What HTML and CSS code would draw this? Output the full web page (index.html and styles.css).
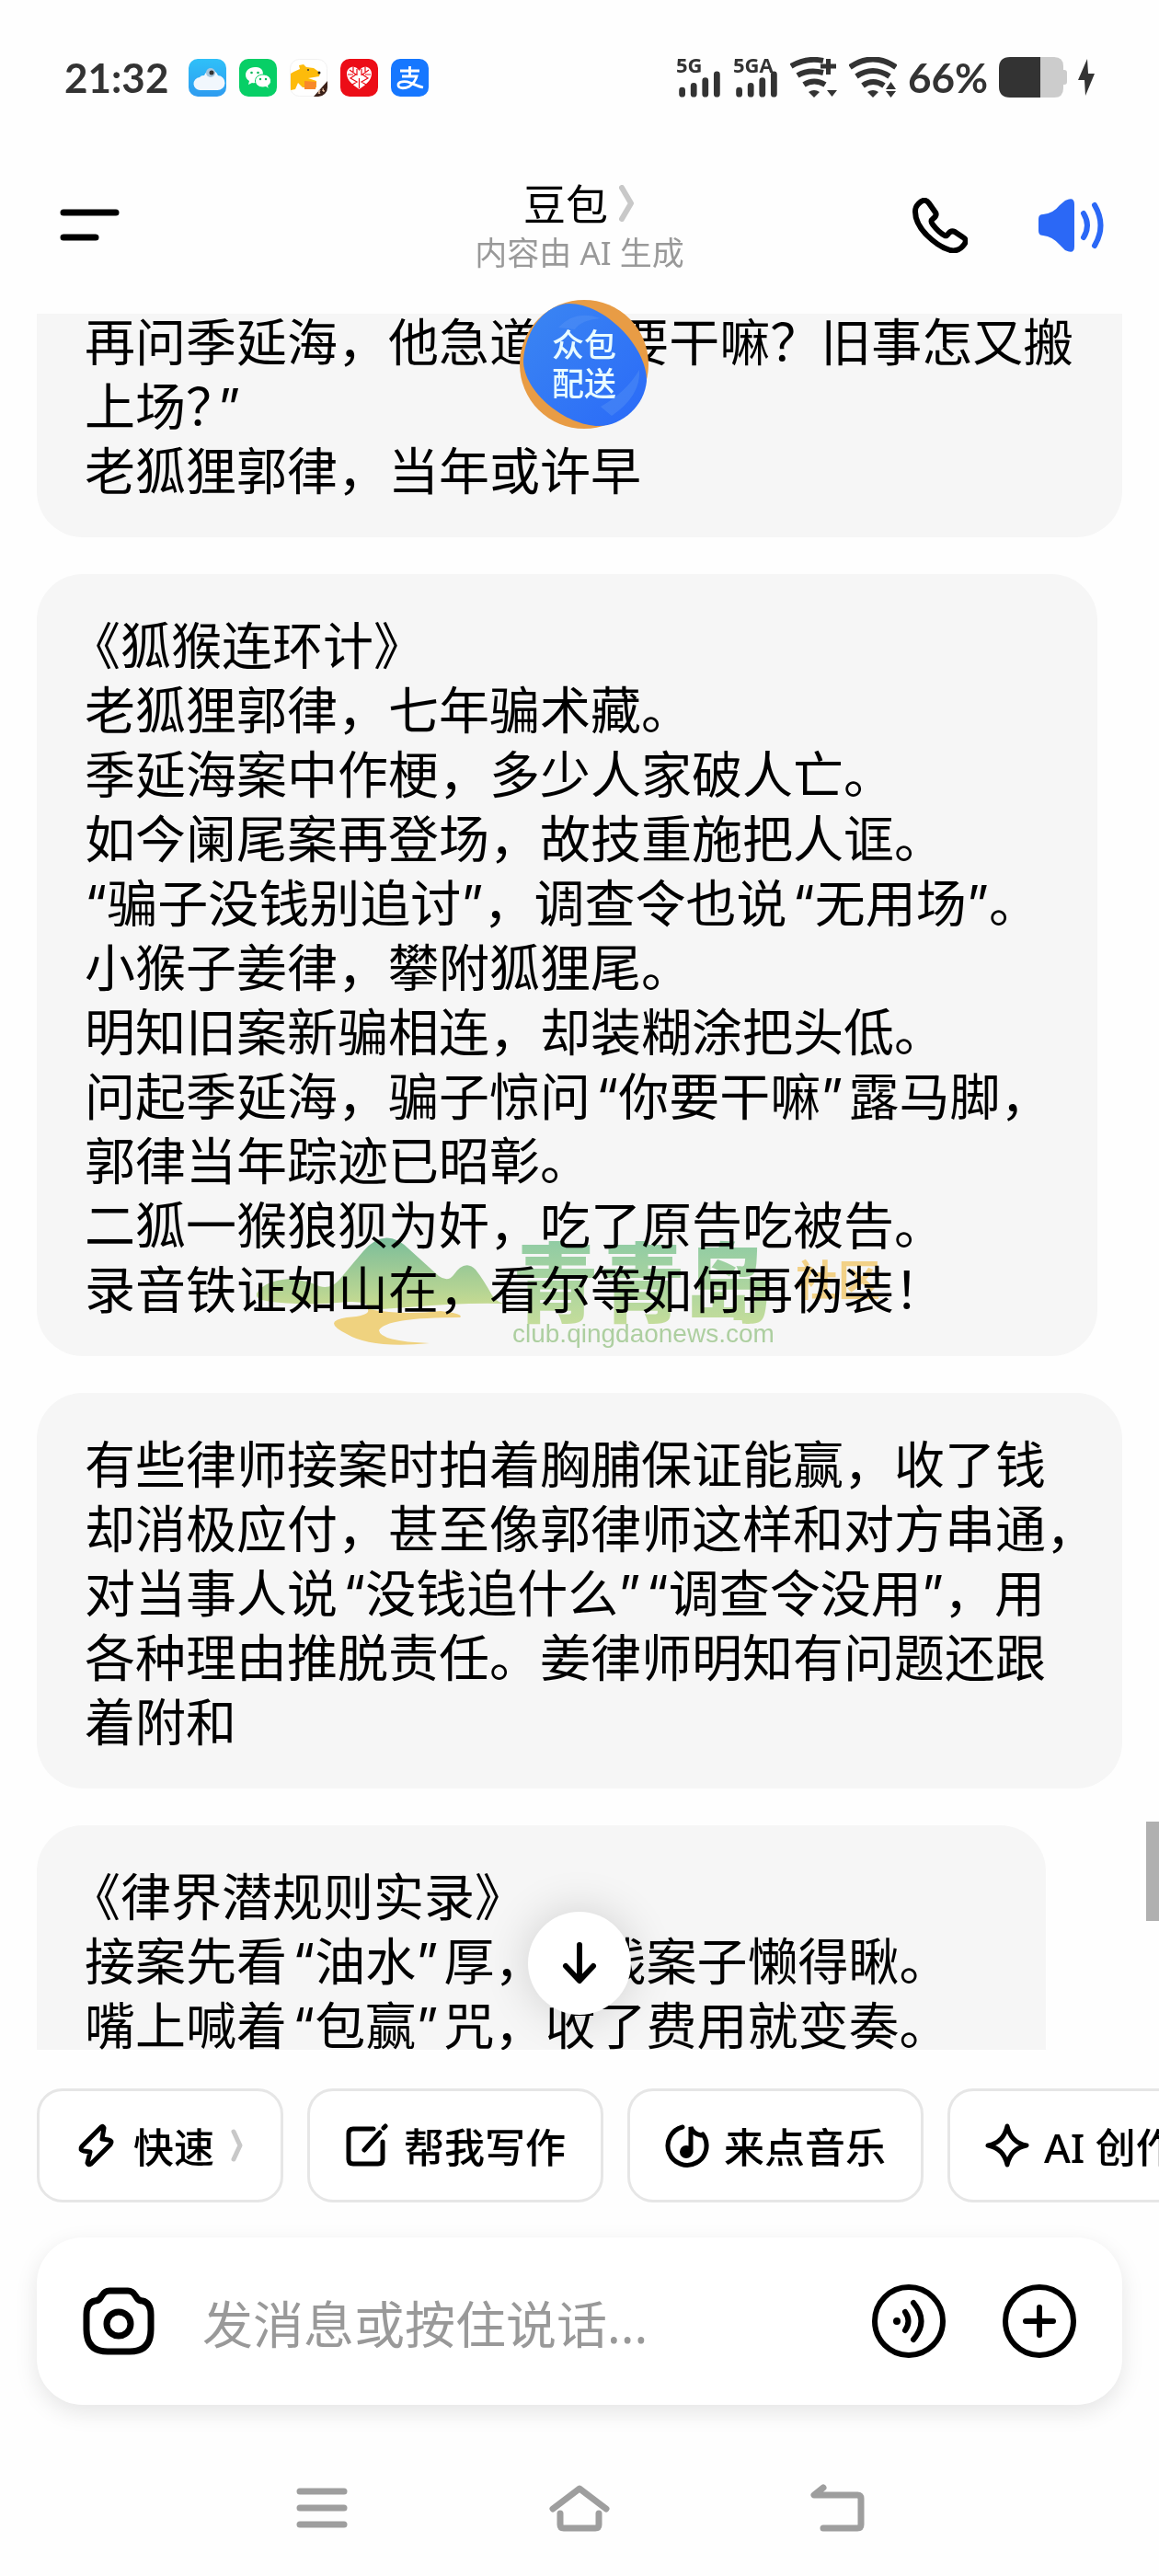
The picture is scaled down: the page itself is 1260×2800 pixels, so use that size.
FILE: index.html
```html
<!DOCTYPE html>
<html lang="zh-CN">
<head>
    <meta charset="UTF-8">
    <meta name="viewport" content="width=device-width, initial-scale=1.0">
    <title>豆包</title>
    <link rel="stylesheet" href="styles.css">
</head>
<body>
    <div class="status-bar">
        <div class="status-left">
            <span class="clock">21:32</span>
            <svg class="app-icon" viewBox="0 0 41 41">
                <defs><linearGradient id="sky" x1="0" y1="0" x2="0" y2="1"><stop offset="0" stop-color="#2fc0f8"/><stop offset="1" stop-color="#2f9cf0"/></linearGradient></defs>
                <rect width="41" height="41" rx="10" fill="url(#sky)"/>
                <path d="M13 34a7 7 0 0 1-1-14 5 5 0 0 1 5-2 8 8 0 0 1 15 0 7 7 0 0 1-1 16z" fill="#f1f7fd"/>
                <circle cx="24" cy="15" r="5" fill="#a9c6dc"/>
                <circle cx="25" cy="15" r="2.500" fill="#333"/>
            </svg>
            <svg class="app-icon" viewBox="0 0 41 41">
                <rect width="41" height="41" rx="10" fill="#07cf66"/>
                <path d="M17 9c-6 0-10 4-10 8.500 0 3 1.500 5 4 6.500l-1 4 4-2c5 1 12-2 12-9S22 9 17 9z" fill="#fff"/>
                <path d="M26 17c-5 0-8.500 3-8.500 7s3.500 7 8.500 7l3-.5 3.500 2-1-3.500c2-1 3-3 3-5 0-4-3.500-7-8.500-7z" fill="#fff" stroke="#07cf66" stroke-width="1"/>
                <g fill="#07b85a"><circle cx="13.500" cy="15" r="1.300"/><circle cx="20.500" cy="15" r="1.300"/><circle cx="23" cy="22" r="1.200"/><circle cx="29" cy="22" r="1.200"/></g>
            </svg>
            <svg class="app-icon" viewBox="0 0 41 41">
                <rect x=".5" y=".5" width="40" height="40" rx="10" fill="#fff" stroke="#f1f1f1"/>
                <path d="M1 16c5-3 8-4 10-5l-1-4 5-1 3 3 8 1 7 5-1 4-12 2 9 3v7H14l-5-5-3 7-5 1z" fill="#fdbb0b"/>
                <path d="M16 24l13 1-1 8H16z" fill="#f8882a"/>
                <circle cx="20" cy="12" r="1" fill="#333"/><circle cx="32" cy="15" r="1.500" fill="#222"/>
                <path d="M26 41l15-17v7a10 10 0 0 1-10 10z" fill="#3b2018"/>
                <path d="M31 38l2-4m0 4l-2-3m4-1l3 1m-2-3l1 4" stroke="#f0c8a8" stroke-width="1"/>
            </svg>
            <svg class="app-icon" viewBox="0 0 41 41">
                <rect width="41" height="41" rx="10" fill="#ec0d17"/>
                <path d="M20.500 33C13 28 7 23 7 16c0-8 10-10 13.500-3C24 6 34 8 34 16c0 7-6 12-13.500 17z" fill="#fff"/>
                <path d="M10 12l7 5-6 4 7 4-5 3m18-16l-7 5 6 4-7 4 5 3M18 11v7m5-7v7m-2.500 3v11M8 17h6m13 0h6M14 9v5m13-5v5" fill="none" stroke="#ec0d17" stroke-width="1.200"/>
            </svg>
            <svg class="app-icon" viewBox="0 0 41 41">
                <rect width="41" height="41" rx="10" fill="#1677ff"/>
                <path d="M10 13h21M20.500 8v11M12 19h16c-1 4-4 8-8 11-4 2-11 3-12-1-1-5 8-5 13-3 5 2 9 4 14 5" fill="none" stroke="#fff" stroke-width="2.800"/>
            </svg>
        </div>
        <div class="status-right">
            <div class="signal">
                <span class="network">5G</span>
                <svg viewBox="0 0 50 31"><path d="M6 23v4M19 18v9M32 12v15M45 5v22" stroke="#333" stroke-width="7" stroke-linecap="round"/></svg>
            </div>
            <div class="signal">
                <span class="network">5GA</span>
                <svg viewBox="0 0 50 31"><path d="M6 23v4M19 18v9M32 12v15M45 5v22" stroke="#333" stroke-width="7" stroke-linecap="round"/></svg>
            </div>
            <svg class="wifi" viewBox="0 0 52 44" fill="none" stroke="#333" stroke-width="6">
                <path d="M1 10Q18 0 36 4M8 20Q20 13 36 17M15 30q11-7 23 0"/>
                <path d="M33 10h17M41.500 2v17" stroke-width="5"/>
                <path d="M20 38q6-4 12 0l-6 6z" fill="#333" stroke="none"/>
                <path d="M40 36h11l-5.500 7z" fill="#333" stroke="none"/>
            </svg>
            <svg class="wifi" viewBox="0 0 52 44" fill="none" stroke="#333" stroke-width="6">
                <path d="M1 11q25-17 50 0M8 21q18-12 36 0M15 31q11-8 23 0"/>
                <path d="M20 38q6-4 12 0l-6 6z" fill="#333" stroke="none"/>
                <path d="M40 35h11l-5.500-8zM40 37h11l-5.500 7z" fill="#333" stroke="none"/>
            </svg>
            <span class="percent">66%</span>
            <svg class="battery" viewBox="0 0 74 44">
                <path d="M45 0h15q10 0 10 10v4h1q3 0 3 3v10q0 3-3 3h-1v4q0 10-10 10H45z" fill="#ccc"/>
                <path d="M45 0H12Q0 0 0 12v20q0 12 12 12h33z" fill="#333"/>
            </svg>
            <svg class="charge" viewBox="0 0 18 40"><path d="M10 0L0 23h7l1 17 10-24h-7z" fill="#333"/></svg>
        </div>
    </div>

    <header class="header">
        <button class="icon-button menu-button" aria-label="菜单">
            <svg width="70" height="36" viewBox="0 0 70 36"><path d="M9 4h57M9 31h35" stroke="#000" stroke-width="7" stroke-linecap="round"/></svg>
        </button>
        <div class="title-block">
            <h1 class="title">豆包
                <svg width="18" height="40" viewBox="0 0 18 40"><path d="M3 3l10 17L3 37" fill="none" stroke="#c8c8c8" stroke-width="6" stroke-linecap="round" stroke-linejoin="round"/></svg>
            </h1>
            <p class="subtitle">内容由 AI 生成</p>
        </div>
        <div class="header-actions">
            <button class="icon-button" aria-label="通话">
                <svg width="60" height="60" viewBox="0 0 60 60"><path d="M6 7Q13-1 18 6L25 16Q27 19 22 23Q19 25 22 29Q28 37 35 41Q37 42 39 39Q42 35 46 37L55 43Q60 46 56 51Q50 59 41 57Q28 53 16 41Q3 28 3 15Q3 10 6 7Z" fill="none" stroke="#000" stroke-width="6" stroke-linejoin="round"/></svg>
            </button>
            <button class="icon-button" aria-label="朗读">
                <svg width="72" height="60" viewBox="0 0 72 60">
                    <path d="M6 18Q17 17 24 8L30 3Q40-2 40 7V53Q40 62 30 57L24 51Q16 42 6 41Q1 41 1 36V23Q1 18 6 18Z" fill="#2b68f6"/>
                    <path d="M50 17q8 13 0 26M62 8q13 22 0 44" fill="none" stroke="#2b68f6" stroke-width="6" stroke-linecap="round"/>
                </svg>
            </button>
        </div>
    </header>

    <main class="chat">
        <div class="messages">
            <div class="bubble wide">再问季延海，他急道<span class="quote-open">“</span>你要干嘛？旧事怎又搬<br>上场？<span class="quote-tight">”</span><br>老狐狸郭律，当年或许早</div>

            <div class="bubble">
                <p class="poem-title">《狐猴连环计》</p>
                <p>老狐狸郭律，七年骗术藏。</p>
                <p>季延海案中作梗，多少人家破人亡。</p>
                <p>如今阑尾案再登场，故技重施把人诓。</p>
                <p>“骗子没钱别追讨”，调查令也说<span class="quote-open">“</span>无用场”。</p>
                <p>小猴子姜律，攀附狐狸尾。</p>
                <p>明知旧案新骗相连，却装糊涂把头低。</p>
                <p>问起季延海，骗子惊问<span class="quote-open">“</span>你要干嘛<span class="quote-close">”</span>露马脚，<br>郭律当年踪迹已昭彰。</p>
                <p>二狐一猴狼狈为奸，吃了原告吃被告。</p>
                <p>录音铁证如山在，看尔等如何再伪装！</p>
                <div class="watermark">
                    <svg width="272" height="124" viewBox="0 0 272 124">
                        <defs>
                            <linearGradient id="hill" x1="0" y1="0" x2="0" y2="1"><stop offset="0" stop-color="#7fc4a0"/><stop offset="1" stop-color="#d3e596"/></linearGradient>
                        </defs>
                        <path d="M0 62Q8 48 36 46Q56 48 68 54Q80 58 90 47Q104 30 116 16Q140-12 166 14L198 43Q208 50 214 42Q226 24 238 36Q246 46 256 64Q262 73 272 73Q230 72 190 75Q150 78 121 80Q124 70 100 71Q50 76 10 70Q-2 68 0 62Z" fill="url(#hill)"/>
                        <path d="M121 79Q160 86 200 81Q226 84 221 88Q140 88 133 102Q134 114 188 116Q124 122 98 106Q70 92 98 88Q124 86 121 79Z" fill="#f8da84"/>
                    </svg>
                    <div class="watermark-text">
                        <div class="watermark-name"><span class="site">青青岛</span><span class="community">社区</span></div>
                        <span class="domain">club.qingdaonews.com</span>
                    </div>
                </div>
            </div>

            <div class="bubble wide">有些律师接案时拍着胸脯保证能赢，收了钱<br>却消极应付，甚至像郭律师这样和对方串通，<br>对当事人说<span class="quote-open">“</span>没钱追什么”<span class="quote-open">“</span>调查令没用”，用<br>各种理由推脱责任。姜律师明知有问题还跟<br>着附和</div>

            <div class="bubble last">
                <p class="poem-title">《律界潜规则实录》</p>
                <p>接案先看<span class="quote-open">“</span>油水<span class="quote-close">”</span>厚，没钱案子懒得瞅。</p>
                <p>嘴上喊着<span class="quote-open">“</span>包赢<span class="quote-close">”</span>咒，收了费用就变奏。</p>
                <p>&nbsp;</p>
            </div>
        </div>
        <button class="scroll-down" aria-label="回到底部">
            <svg width="38" height="46" viewBox="0 0 38 46"><path d="M19 3v38M4 26l15 16 15-16" fill="none" stroke="#000" stroke-width="6" stroke-linecap="round" stroke-linejoin="round"/></svg>
        </button>
        <div class="scrollbar"></div>
    </main>

    <button class="floating-badge">
        <svg width="140" height="140" viewBox="0 0 140 140">
            <defs><linearGradient id="ball" x1="0" y1="0" x2="1" y2="1"><stop offset="0" stop-color="#3b86f2"/><stop offset="1" stop-color="#2a6af8"/></linearGradient></defs>
            <circle cx="70" cy="70" r="70" fill="#e89c45"/>
            <path d="M4 66C6 30 30 4 54 4C92 4 138 50 138 88C136 114 112 137 86 137C50 137 4 100 4 66Z" fill="url(#ball)"/>
            <path d="M42 30Q60 10 88 20Q66 22 60 32ZM88 116Q116 100 130 76Q132 104 100 126Z" fill="#5b97f5" opacity=".4"/>
        </svg>
        <span class="badge-text">众包<br>配送</span>
    </button>

    <div class="chips">
        <button class="chip">
            <svg class="chip-icon" viewBox="0 0 48 48"><path d="M29 4L8 25q-3 4 2 5l7 1-3 12q1 3 4 1l21-21q3-4-2-5l-7-1 2-12q-1-3-3-1z" fill="none" stroke="#000" stroke-width="5" stroke-linejoin="round"/></svg>
            快速
            <svg class="chip-arrow" viewBox="0 0 14 36"><path d="M3 3l7 15-7 15" fill="none" stroke="#c8c8c8" stroke-width="5" stroke-linecap="round" stroke-linejoin="round"/></svg>
        </button>
        <button class="chip">
            <svg class="chip-icon" viewBox="0 0 48 48"><path d="M31 6H9q-5 0-5 5v28q0 5 5 5h27q5 0 5-5V20M21 29L38 10M42 5l2-2" fill="none" stroke="#000" stroke-width="5" stroke-linecap="round"/></svg>
            帮我写作
        </button>
        <button class="chip">
            <svg class="chip-icon" viewBox="0 0 48 48">
                <path d="M19 4a21 21 0 1 0 22 8M28 31V4q2 7 11 9" fill="none" stroke="#000" stroke-width="5" stroke-linecap="round"/>
                <circle cx="23" cy="31" r="7" fill="#000"/>
            </svg>
            来点音乐
        </button>
        <button class="chip">
            <svg class="chip-icon" viewBox="0 0 48 48"><path d="M24 3Q28 21 45 24Q28 27 24 45Q20 27 3 24Q20 21 24 3Z" fill="none" stroke="#000" stroke-width="5" stroke-linejoin="round"/></svg>
            AI 创作
        </button>
    </div>

    <div class="composer">
        <button class="icon-button" aria-label="拍照">
            <svg width="78" height="74" viewBox="0 0 78 74" fill="none" stroke="#000" stroke-width="7">
                <path d="M29 4h20q5 0 8 5l2 3q2 3 6 3 9 2 9 15v16q0 24-23 24H27Q4 70 4 46V30q0-13 9-15 4 0 6-3l2-3q3-5 8-5z"/>
                <circle cx="39" cy="40" r="13"/>
            </svg>
        </button>
        <input class="message-input" type="text" aria-label="消息" placeholder="发消息或按住说话...">
        <button class="icon-button" aria-label="语音">
            <svg width="80" height="80" viewBox="0 0 80 80" fill="none" stroke="#000" stroke-width="6" stroke-linecap="round">
                <circle cx="40" cy="40" r="37"/>
                <path d="M36 30q7 10 0 20M45 20q17 20 0 40"/>
                <circle cx="27" cy="40" r="4" fill="#000" stroke="none"/>
            </svg>
        </button>
        <button class="icon-button" aria-label="更多">
            <svg width="80" height="80" viewBox="0 0 80 80" fill="none" stroke="#000" stroke-width="6" stroke-linecap="round">
                <circle cx="40" cy="40" r="37"/>
                <path d="M40 25v30M25 40h30"/>
            </svg>
        </button>
    </div>

    <nav class="system-nav">
        <button class="icon-button" aria-label="最近任务">
            <svg width="66" height="52" viewBox="0 0 66 52"><path d="M9 8h48M9 26h48M9 44h48" stroke="#9e9e9e" stroke-width="7" stroke-linecap="round"/></svg>
        </button>
        <button class="icon-button" aria-label="主屏幕">
            <svg width="66" height="52" viewBox="0 0 66 52"><path d="M4 27L33 5l29 22M12 32v12q0 4 4 4h34q4 0 4-4V32" fill="none" stroke="#9e9e9e" stroke-width="7" stroke-linecap="round" stroke-linejoin="round"/></svg>
        </button>
        <button class="icon-button" aria-label="返回">
            <svg width="66" height="52" viewBox="0 0 66 52"><path d="M18 4L8 12h47q4 0 4 4v28q0 4-4 4H18" fill="none" stroke="#9e9e9e" stroke-width="7" stroke-linecap="round" stroke-linejoin="round"/></svg>
        </button>
    </nav>
</body>
</html>
```

FILE: styles.css
```css
* {
    box-sizing: border-box;
}

body {
    position: relative;
    margin: 0;
    height: 100vh;
    display: flex;
    flex-direction: column;
    overflow: hidden;
    background-color: #fefefe;
    color: #000;
    font-family: "Noto Sans", "Noto Sans CJK SC", sans-serif;
}

p, h1 {
    margin: 0;
}

svg {
    display: block;
    flex: none;
}

button {
    font-family: inherit;
    color: inherit;
}

.icon-button {
    padding: 0;
    border: none;
    background: none;
    cursor: pointer;
}

/* status bar */
.status-bar {
    display: flex;
    justify-content: space-between;
    align-items: center;
    height: 168px;
    padding: 0 70px;
    color: #333;
    font-family: Lato, sans-serif;
}

.status-left {
    display: flex;
    align-items: center;
    gap: 14px;
}

.clock {
    margin-right: 8px;
    font-size: 44px;
    font-weight: bold;
}

.app-icon {
    width: 41px;
    height: 41px;
}

.status-right {
    display: flex;
    align-items: center;
    gap: 12px;
}

.signal {
    width: 50px;
    height: 44px;
    display: flex;
    flex-direction: column;
    justify-content: space-between;
}

.network {
    height: 14px;
    font-family: "Open Sans", sans-serif;
    font-size: 22px;
    font-weight: bold;
    line-height: 16px;
}

.signal svg {
    width: 50px;
    height: 30px;
}

.wifi {
    width: 52px;
    height: 44px;
}

.percent {
    font-size: 44px;
    font-weight: bold;
}

.battery {
    width: 74px;
    height: 44px;
}

.charge {
    width: 18px;
    height: 40px;
}

/* header */
.header {
    display: grid;
    grid-template-columns: 1fr auto 1fr;
    align-items: center;
    height: 173px;
    padding: 0 60px 20px;
}

.menu-button {
    justify-self: start;
}

.title-block {
    text-align: center;
}

.title {
    display: flex;
    justify-content: center;
    align-items: center;
    gap: 12px;
    font-size: 46px;
    font-weight: 400;
    line-height: 60px;
}

.subtitle {
    color: #999;
    font-size: 35px;
    line-height: 48px;
}

.header-actions {
    justify-self: end;
    display: flex;
    align-items: center;
    gap: 76px;
}

/* chat */
.chat {
    position: relative;
    flex: 1;
    min-height: 0;
    overflow: hidden;
}

/* the list is scrolled part of the way */
.messages {
    display: flex;
    flex-direction: column;
    align-items: flex-start;
    gap: 40px;
    margin-top: -47px;
    padding: 0 40px;
}

.bubble {
    position: relative;
    max-width: 100%;
    padding: 43px 50px 37px 52px;
    border-radius: 50px;
    background-color: #f6f6f6;
    font-family: Inter, "Noto Sans CJK SC", sans-serif;
    font-size: 55px;
    line-height: 70px;
}

.bubble.wide {
    width: 100%;
    padding-right: 26px;
}

.bubble.last {
    min-width: 93%;
}

.poem-title {
    text-indent: -16px;
}

.quote-open {
    margin-left: 6px;
}

.quote-close {
    margin-right: 6px;
}

.quote-tight {
    margin-left: -20px;
}

.scroll-down {
    position: absolute;
    left: 50%;
    bottom: 38px;
    width: 112px;
    height: 112px;
    margin-left: -56px;
    display: flex;
    align-items: center;
    justify-content: center;
    border: none;
    border-radius: 50%;
    background-color: #fff;
    box-shadow: 0 0 50px rgba(0,0,0,0.16);
}

.scrollbar {
    position: absolute;
    right: 0;
    bottom: 140px;
    width: 14px;
    height: 108px;
    background-color: #b0b0b0;
}

/* watermark over the poem */
.watermark {
    position: absolute;
    left: 239px;
    bottom: 6px;
    display: flex;
    align-items: flex-end;
    gap: 6px;
    mix-blend-mode: multiply;
}

.watermark-name {
    display: flex;
    align-items: center;
    gap: 26px;
    line-height: 100px;
}

.site {
    font-size: 94px;
    font-weight: 900;
    background: linear-gradient(#94d3aa, #cfe6a0);
    -webkit-background-clip: text;
    background-clip: text;
    color: transparent;
}

.community {
    color: #fbd98c;
    font-size: 46px;
    font-weight: bold;
    line-height: 60px;
    padding-bottom: 10px;
}

.domain {
    display: block;
    margin-top: -14px;
    color: #b4d7a6;
    font-family: "Liberation Sans", sans-serif;
    font-size: 28px;
    line-height: 36px;
}

/* round badge floating over the page */
.floating-badge {
    position: absolute;
    left: 50%;
    top: 326px;
    width: 140px;
    height: 140px;
    margin-left: -65px;
    padding: 0;
    display: grid;
    place-items: center;
    border: none;
    background: none;
}

.floating-badge > * {
    grid-area: 1 / 1;
}

.badge-text {
    z-index: 1;
    color: #e8fbff;
    font-size: 35px;
    font-weight: 500;
    line-height: 42px;
}

/* shortcuts */
.chips {
    display: flex;
    gap: 26px;
    padding: 42px 0 38px 40px;
    overflow: hidden;
}

.chip {
    flex: none;
    display: flex;
    align-items: center;
    gap: 16px;
    height: 124px;
    padding: 0 38px;
    border: 3px solid #e6e6e6;
    border-radius: 28px;
    background-color: #fff;
    font-size: 44px;
    font-weight: 500;
    white-space: nowrap;
}

.chip-icon {
    width: 48px;
    height: 48px;
}

.chip-arrow {
    width: 18px;
    height: 36px;
}

/* message box */
.composer {
    display: flex;
    align-items: center;
    height: 182px;
    margin: 0 40px;
    padding: 0 50px;
    gap: 52px;
    border-radius: 50px;
    background-color: #fff;
    box-shadow: 0 8px 24px rgba(0,0,0,0.1);
}

.message-input {
    flex: 1;
    min-width: 0;
    padding: 4px 0 0;
    border: none;
    outline: none;
    background: none;
    font-family: inherit;
    font-size: 55px;
}

.message-input::placeholder {
    color: #999;
}

.composer .icon-button + .icon-button {
    margin-left: 10px;
}

/* system navigation */
.system-nav {
    display: flex;
    justify-content: center;
    gap: 214px;
    padding: 86px 0 48px;
}
```
